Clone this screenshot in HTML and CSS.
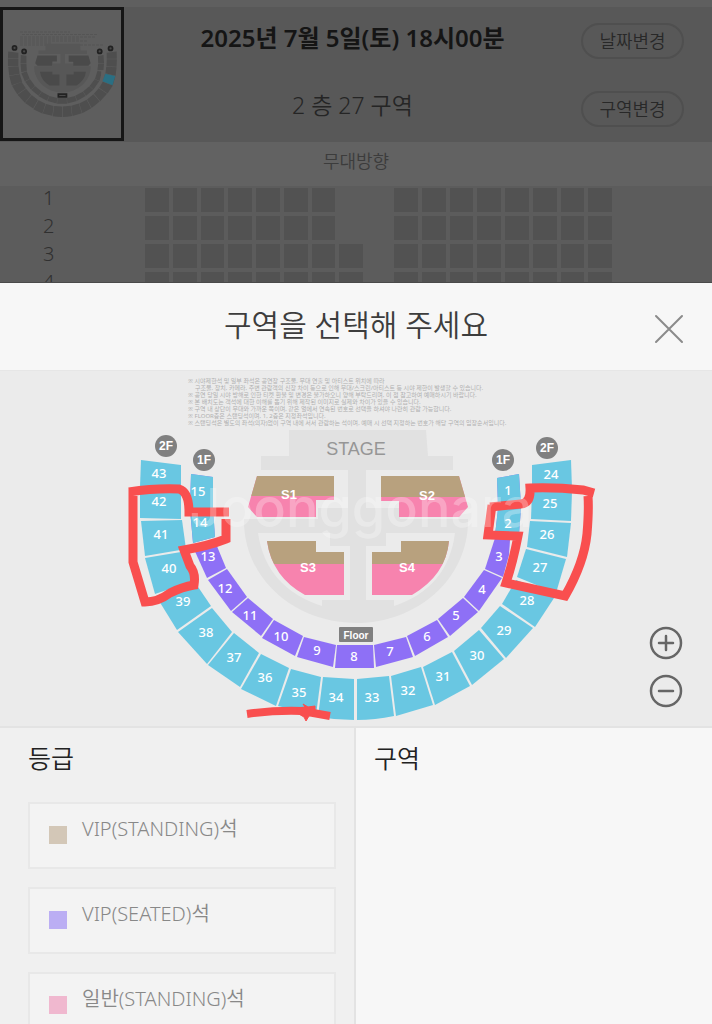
FILE: index.html
```html
<!DOCTYPE html>
<html lang="ko">
<head>
<meta charset="utf-8">
<meta name="viewport" content="width=device-width, initial-scale=1">
<title>구역 선택</title>
<link rel="stylesheet" href="styles.css">
</head>
<body>
<div class="app">
  <div class="behind">
    <header class="booking">
      <svg class="thumb" viewBox="0 0 118 128" aria-label="좌석 배치도">
        <g class="mini-notes"><path d="M17 22H67M19 24.500H94M17 27H92M17 29H76M17 31H84M17 33H48M17 35H101"/></g>
        <g transform="translate(-30.300 -74.500) scale(.252)">
          <use href="#stage" fill="#575757"/>
          <use href="#blocks" fill="#4a4a4a"/>
          <use href="#outer" fill="#4e4e4e"/>
          <use href="#inner" fill="#4e4e4e"/>
          <path fill="#2a6f83" d="M526 549L566 558L555 594L515 578Z"/>
          <g class="mini-badge"><circle cx="166" cy="446" r="8"/><circle cx="204" cy="460" r="8"/><circle cx="504" cy="460" r="8"/><circle cx="547" cy="448" r="8"/><path d="M340 629h32v11h-32z"/></g>
        </g>
      </svg>
      <div class="booking-info">
        <h1 class="booking-date">2025년 7월 5일(토) 18시00분</h1>
        <p class="booking-area">2 층 27 구역</p>
      </div>
      <div class="booking-actions">
        <button class="pill" type="button">날짜변경</button>
        <button class="pill" type="button">구역변경</button>
      </div>
    </header>
    <p class="direction">무대방향</p>
    <div class="seats">
      <div class="seat-row"><span class="row-no">1</span><div class="seat-group"><i></i><i></i><i></i><i></i><i></i><i></i><i></i></div><div class="seat-group"><i></i><i></i><i></i><i></i><i></i><i></i><i></i><i></i></div></div>
      <div class="seat-row"><span class="row-no">2</span><div class="seat-group"><i></i><i></i><i></i><i></i><i></i><i></i><i></i></div><div class="seat-group"><i></i><i></i><i></i><i></i><i></i><i></i><i></i><i></i></div></div>
      <div class="seat-row"><span class="row-no">3</span><div class="seat-group"><i></i><i></i><i></i><i></i><i></i><i></i><i></i><i></i></div><div class="seat-group"><i></i><i></i><i></i><i></i><i></i><i></i><i></i><i></i></div></div>
      <div class="seat-row"><span class="row-no">4</span><div class="seat-group"><i></i><i></i><i></i><i></i><i></i><i></i><i></i><i></i></div><div class="seat-group"><i></i><i></i><i></i><i></i><i></i><i></i><i></i><i></i></div></div>
    </div>
  </div>

  <section class="sheet">
    <header class="sheet-head">
      <h2 class="sheet-title">구역을 선택해 주세요</h2>
      <button class="close" type="button" aria-label="닫기"><svg viewBox="0 0 32 32"><path d="M3 3L29 29M29 3L3 29"/></svg></button>
    </header>

    <div class="map">
      <svg class="map-svg" viewBox="0 371 712 355">
        <defs>
          <g id="outer">
            <path d="M141 460L181 465V488L140 487Z"/>
            <path d="M140 489L181 490V519L140 518Z"/>
            <path d="M141 521L182 520L186 549L145 556Z"/>
            <path d="M145 558L187 551L196 580L155 594Z"/>
            <path d="M156 596L194 581L211 606L177 630Z"/>
            <path d="M178 632L212 608L232 632L207 664Z"/>
            <path d="M208 665L234 633L259 653L240 687Z"/>
            <path d="M241 689L261 654L289 668L276 706Z"/>
            <path d="M278 706L291 669L321 677L316 715Z"/>
            <path d="M318 717L323 677L354 679V720Q336 720 318 717Z"/>
            <path d="M357 679L389 676L394 716Q375 720 357 720Z"/>
            <path d="M391 676L421 667L433 705L396 716Z"/>
            <path d="M423 667L452 652L470 686L435 705Z"/>
            <path d="M454 651L479 630L504 659L472 685Z"/>
            <path d="M481 628L500 606L533 628L506 658Z"/>
            <path d="M502 604L516 580L556 595L535 627Z"/>
            <path d="M526 549L566 559L556 593L517 577Z"/>
            <path d="M530 521L571 523L567 557L527 547Z"/>
            <path d="M532 491H572L571 521L531 519Z"/>
            <path d="M532 465L571 460L572 489H532Z"/>
          </g>
          <g id="inner">
            <path d="M191 474L213 477V508H190Z"/>
            <path d="M190 510H213L215 537L193 543Z"/>
            <path d="M193 547L214 539L226 568L207 578Z"/>
            <path d="M208 580L227 569L247 597L231 611Z"/>
            <path d="M232 612L248 598L273 619L261 636Z"/>
            <path d="M262 638L274 620L303 636L295 656Z"/>
            <path d="M297 657L304 637L336 645L333 667Z"/>
            <path d="M337 645H373L374 668H335Z"/>
            <path d="M374 645L406 637L413 657L376 667Z"/>
            <path d="M407 636L437 620L448 637L415 656Z"/>
            <path d="M438 619L463 598L478 612L450 636Z"/>
            <path d="M464 597L484 570L502 578L479 611Z"/>
            <path d="M485 569L495 538L510 540L509 555L503 577Z"/>
            <path d="M498 509L521 508L519 534L495 535Z"/>
            <path d="M497 478L519 474L521 506L498 507Z"/>
          </g>
          <g id="stage">
            <path d="M289 430H426L428 456H453V470H366V508H400V519H468C469 578 418 623 356 623S243 578 244 519H318V508H348V470H261V456H289Z"/>
          </g>
          <g id="blocks">
            <path d="M257 476H334V500H316V517H257L248 507Z"/>
            <path d="M381 476H459L468 507L459 517H399V501H381Z"/>
            <path d="M267 541H316V552H344V595H305Q272 577 267 541Z"/>
            <path d="M401 541H449Q446 575 412 595H372V552H401Z"/>
          </g>
          <clipPath id="s1"><path d="M257 476H334V500H316V517H257L248 507Z"/></clipPath>
          <clipPath id="s2"><path d="M381 476H459L468 507L459 517H399V501H381Z"/></clipPath>
          <clipPath id="s3"><path d="M267 541H316V552H344V595H305Q272 577 267 541Z"/></clipPath>
          <clipPath id="s4"><path d="M401 541H449Q446 575 412 595H372V552H401Z"/></clipPath>
        </defs>

        <g class="notes">
          <text x="188" y="383">※ 시야제한석 및 일부 좌석은 공연장 구조물, 무대 연출 및 아티스트 위치에 따라</text>
          <text x="195" y="390">구조물, 장치, 카메라, 주변 관람객의 신장 차이 등으로 인해 무대/스크린/아티스트 등 시야 제한이 발생할 수 있습니다.</text>
          <text x="188" y="397">※ 공연 당일 시야 방해로 인한 티켓 환불 및 변경은 불가하오니 양해 부탁드리며, 이 점 참고하여 예매하시기 바랍니다.</text>
          <text x="188" y="404">※ 본 배치도는 객석에 대한 이해를 돕기 위해 제작된 이미지로 실제와 차이가 있을 수 있습니다.</text>
          <text x="188" y="411">※ 구역 내 상단이 무대와 가까운 쪽이며, 같은 열에서 연속된 번호로 선택을 하셔야 나란히 관람 가능합니다.</text>
          <text x="188" y="418">※ FLOOR층은 스탠딩석이며, 1, 2층은 지정좌석입니다.</text>
          <text x="188" y="425">※ 스탠딩석은 별도의 좌석(의자)없이 구역 내에 서서 관람하는 석이며, 예매 시 선택 지정하는 번호가 해당 구역의 입장순서입니다.</text>
        </g>

        <use href="#stage" fill="#e1e1e1"/>
        <path fill="#ebebeb" d="M258 533H330V546H350V600H322V606Q266 588 258 533ZM386 533H455Q448 588 394 606V600H366V546H386Z"/>
        <text class="stage-label" x="356" y="455">STAGE</text>

        <g fill="#f783ae"><use href="#blocks"/></g>
        <g fill="#b8a17e">
          <path clip-path="url(#s1)" d="M240 470H340V496H240Z"/>
          <path clip-path="url(#s2)" d="M375 470H475V497H375Z"/>
          <path clip-path="url(#s3)" d="M260 535H350V564H260Z"/>
          <path clip-path="url(#s4)" d="M365 535H455V564H365Z"/>
        </g>
        <g class="block-label"><text x="289" y="499">S1</text><text x="427" y="500">S2</text><text x="308" y="572">S3</text><text x="407" y="572">S4</text></g>

        <use href="#outer" fill="#69c7e2"/>
        <use href="#inner" fill="#8e70f6"/>
        <g fill="#69c7e2"><path d="M191 474L213 477V508H190ZM190 508H213L215 537L193 543ZM498 509L521 508L519 534L495 535ZM497 478L519 474L521 506L498 507Z"/></g>

        <g class="badge"><circle cx="166" cy="446" r="11"/><circle cx="204" cy="460" r="11"/><circle cx="503" cy="460" r="11"/><circle cx="547" cy="448" r="11"/><rect x="339" y="627" width="34" height="15" rx="1"/></g>
        <g class="badge-label"><text x="166" y="450">2F</text><text x="204" y="464">1F</text><text x="503" y="464">1F</text><text x="547" y="452">2F</text></g>
        <text class="floor-label" x="356" y="639">Floor</text>

        <g class="zone">
          <text x="159" y="478">43</text><text x="159" y="506">42</text><text x="161" y="539">41</text><text x="169" y="573">40</text><text x="183" y="606">39</text><text x="206" y="637">38</text><text x="234" y="662">37</text><text x="265" y="682">36</text><text x="299" y="697">35</text><text x="336" y="702">34</text>
          <text x="372" y="702">33</text><text x="408" y="695">32</text><text x="443" y="681">31</text><text x="477" y="660">30</text><text x="504" y="635">29</text><text x="527" y="605">28</text><text x="540" y="572">27</text><text x="547" y="539">26</text><text x="550" y="508">25</text><text x="551" y="479">24</text>
          <text x="198" y="496">15</text><text x="200" y="527">14</text><text x="208" y="561">13</text><text x="225" y="593">12</text><text x="250" y="620">11</text><text x="281" y="641">10</text><text x="317" y="655">9</text><text x="354" y="661">8</text><text x="390" y="656">7</text><text x="427" y="641">6</text><text x="456" y="620">5</text><text x="482" y="594">4</text><text x="499" y="561">3</text><text x="508" y="528">2</text><text x="508" y="495">1</text>
        </g>

        <g class="marker">
          <path d="M229 512H189Q189 492 179 489Q155 488 129 492M133 489V562L145 602Q158 602 170 593Q182 587 194 585Q196 573 190 566L184 550Q208 546 226 539V519"/>
          <path d="M594 493L583 490Q555 487 530 488Q531 503 521 504L490 507M492 505L488 535L518 536Q513 562 506 583L565 596Q584 563 587 534Q589 510 588 496"/>
          <path class="underline" d="M247 714Q275 710 302 711L330 716"/>
          <path class="marker-fill" d="M297 708L305 707L303 704L308 707L315 706V712L309 716L306 721L304 717L297 713Z"/>
        </g>
        <text class="watermark" x="361" y="527">Joonggonara</text>
      </svg>
      <div class="zoom">
        <button type="button" aria-label="확대"><svg viewBox="0 0 34 34"><circle cx="17" cy="17" r="15"/><path d="M10 17H24M17 10V24"/></svg></button>
        <button type="button" aria-label="축소"><svg viewBox="0 0 34 34"><circle cx="17" cy="17" r="15"/><path d="M10 17H24"/></svg></button>
      </div>
    </div>

    <div class="panels">
      <div class="panel grades">
        <h3 class="panel-title">등급</h3>
        <button class="grade" type="button"><span class="swatch tan"></span><span class="grade-name">VIP(STANDING)석</span></button>
        <button class="grade" type="button"><span class="swatch violet"></span><span class="grade-name">VIP(SEATED)석</span></button>
        <button class="grade" type="button"><span class="swatch pink"></span><span class="grade-name">일반(STANDING)석</span></button>
      </div>
      <div class="panel areas">
        <h3 class="panel-title">구역</h3>
      </div>
    </div>
  </section>
</div>
</body>
</html>
```
FILE: styles.css
```css
* { box-sizing: border-box; }
body, h1, h2, h3, p { margin: 0; }
body { font-family: "Noto Sans", "Noto Sans CJK KR", sans-serif; background: #f7f7f7; }
button { font: inherit; color: inherit; background: none; border: 0; padding: 0; cursor: pointer; }
svg { display: block; }

.app { height: 100vh; display: flex; flex-direction: column; overflow: hidden; }

.behind { flex: none; height: 283px; overflow: hidden; background: #5f5f5f; padding-top: 7px; border-bottom: 1px solid #4a4a4a; }
.booking { display: grid; grid-template-columns: 124px 1fr 131px; height: 135px; background: #585858; }
.thumb { width: 124px; height: 134px; border: 3px solid #161616; background: #5e5e5e; }
.mini-notes { fill: none; stroke: #555; stroke-dasharray: 3 1; }
.mini-badge { fill: #4a4a4a; stroke: #222; stroke-width: 7; }
.booking-info { display: flex; flex-direction: column; align-items: center; justify-content: space-between; padding: 15px 0 21px; }
.booking-date { font-size: 24px; line-height: 32px; font-weight: 600; color: #151515; }
.booking-area { font-size: 23px; line-height: 32px; font-weight: 350; color: #252525; }
.booking-actions { display: flex; flex-direction: column; justify-content: space-between; padding: 16px 28px 15px 0; }
.pill { height: 36px; border: 2px solid #4f4f4f; border-radius: 18px; font-size: 18px; line-height: 30px; font-weight: 350; color: #282828; }
.direction { text-align: center; font-size: 18px; line-height: 38px; height: 44px; font-weight: 350; color: #3c3c3c; background: #626262; }
.seats { background: #5c5c5c; padding-top: 2px; display: grid; gap: 4px; }
.seat-row { display: grid; grid-template-columns: 114px 218px 218px; column-gap: 31px; height: 24px; }
.row-no { padding-left: 43px; font-size: 20px; line-height: 20px; font-weight: 300; color: #303030; }
.seat-group { display: grid; grid-template-columns: repeat(8, 1fr); gap: 4px; }
.seat-group i { background: #525252; }

.sheet { flex: 1; min-height: 0; display: flex; flex-direction: column; background: #f7f7f7; }
.sheet-head { flex: none; position: relative; height: 88px; display: flex; align-items: center; justify-content: center; border-bottom: 1px solid #e6e6e6; }
.sheet-title { font-size: 30px; line-height: 40px; font-weight: 350; color: #3d3d3d; padding-bottom: 4px; }
.close { position: absolute; right: 27px; top: 30px; width: 32px; height: 32px; }
.close path { fill: none; stroke: #8b8b8b; stroke-width: 2; stroke-linecap: round; }

.map { flex: none; position: relative; background: #ebebeb; border-bottom: 2px solid #e3e3e3; }
.map-svg { width: 100%; height: auto; }
.map-svg text { text-anchor: middle; }
.map-svg .notes text { text-anchor: start; font-size: 6px; fill: #b0b0b0; }
.map-svg .stage-label { font: 18px "Liberation Sans", sans-serif; fill: #969696; }
.block-label { font: bold 13px "Liberation Sans", sans-serif; fill: #fff; }
.badge { fill: #808080; }
.badge-label { font: bold 12px "Liberation Sans", sans-serif; fill: #fff; }
.floor-label { font: bold 10px "Liberation Sans", sans-serif; fill: #fff; }
.zone { font-size: 13px; font-weight: 500; fill: #fff; }
.watermark { font: 500 54px Inter, sans-serif; fill: #fff; opacity: .28; }
.marker { fill: none; stroke: #f94f4f; stroke-width: 9; stroke-linejoin: miter; }
.marker .underline { stroke-width: 8; }
.marker-fill { fill: #f94f4f; stroke-width: 1; }
.zoom { position: absolute; right: 29px; bottom: 18px; display: grid; gap: 14px; }
.zoom button, .zoom svg { width: 34px; height: 34px; }
.zoom svg { fill: none; stroke: #666; stroke-width: 2.5; stroke-linecap: round; }

.panels { flex: 1; min-height: 0; display: grid; grid-template-columns: 1fr 1fr; }
.panel { padding: 14px 18px; overflow: hidden; }
.panel-title { font-size: 25px; line-height: 32px; font-weight: 350; color: #222; }
.grades { background: #f0f0f0; border-right: 2px solid #e3e3e3; padding-left: 28px; }
.grades .panel-title { margin-bottom: 28px; }
.grade { display: flex; align-items: flex-start; gap: 15px; width: 100%; height: 67px; margin-bottom: 18px; padding: 11px 19px; border: 2px solid #e8e8e8; background: #f3f3f3; text-align: left; }
.swatch { flex: none; width: 18px; height: 18px; margin-top: 11px; }
.tan { background: #d3c7b7; }
.violet { background: #bbaef3; }
.pink { background: #f0b8cf; }
.grade-name { font-size: 20px; line-height: 28px; font-weight: 350; color: #888; }
```
